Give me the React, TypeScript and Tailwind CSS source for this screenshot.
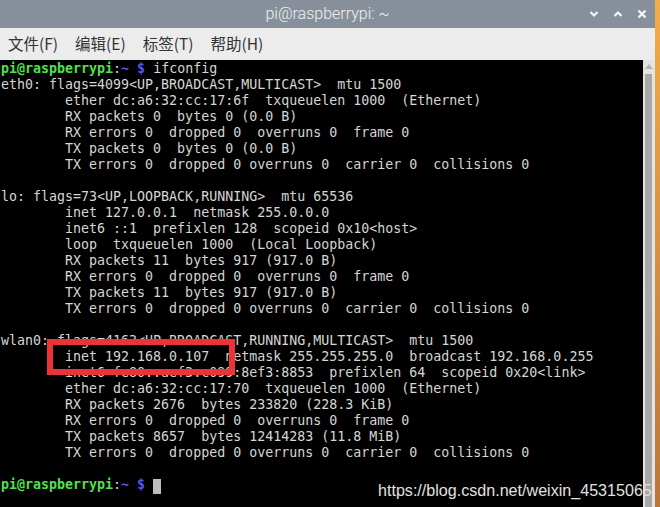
import React from "react";

const lines: string[] = [
  "eth0: flags=4099<UP,BROADCAST,MULTICAST>  mtu 1500",
  "        ether dc:a6:32:cc:17:6f  txqueuelen 1000  (Ethernet)",
  "        RX packets 0  bytes 0 (0.0 B)",
  "        RX errors 0  dropped 0  overruns 0  frame 0",
  "        TX packets 0  bytes 0 (0.0 B)",
  "        TX errors 0  dropped 0 overruns 0  carrier 0  collisions 0",
  "",
  "lo: flags=73<UP,LOOPBACK,RUNNING>  mtu 65536",
  "        inet 127.0.0.1  netmask 255.0.0.0",
  "        inet6 ::1  prefixlen 128  scopeid 0x10<host>",
  "        loop  txqueuelen 1000  (Local Loopback)",
  "        RX packets 11  bytes 917 (917.0 B)",
  "        RX errors 0  dropped 0  overruns 0  frame 0",
  "        TX packets 11  bytes 917 (917.0 B)",
  "        TX errors 0  dropped 0 overruns 0  carrier 0  collisions 0",
  "",
  "wlan0: flags=4163<UP,BROADCAST,RUNNING,MULTICAST>  mtu 1500",
  "        inet 192.168.0.107  netmask 255.255.255.0  broadcast 192.168.0.255",
  "        inet6 fe80::aef3:c099:8ef3:8853  prefixlen 64  scopeid 0x20<link>",
  "        ether dc:a6:32:cc:17:70  txqueuelen 1000  (Ethernet)",
  "        RX packets 2676  bytes 233820 (228.3 KiB)",
  "        RX errors 0  dropped 0  overruns 0  frame 0",
  "        TX packets 8657  bytes 12414283 (11.8 MiB)",
  "        TX errors 0  dropped 0 overruns 0  carrier 0  collisions 0",
  "",
];

function Prompt({ children }: { children?: React.ReactNode }) {
  return (
    <div className="h-[16px] whitespace-pre">
      <span className="font-bold text-[#4fe04f]">pi@raspberrypi</span>
      <span className="text-[#d6d6d6]">:</span>
      <span className="font-bold text-[#5656ee]">~ $</span>
      <span className="text-[#d6d6d6]"> </span>
      {children}
    </div>
  );
}

export default function App() {
  return (
    <div className="flex h-[507px] w-[660px] overflow-hidden bg-black">
      <div className="flex w-[655px] flex-col">
        {/* title bar */}
        <div className="relative flex h-[28px] items-center justify-center bg-[#87909a]">
          <span
            className="text-[16px] text-[#eef0f2]"
            style={{ fontFamily: "Roboto, 'Noto Sans', sans-serif", fontWeight: 300 }}
          >
            pi@raspberrypi: ~
          </span>
          <div className="absolute right-[8px] top-0 flex h-[28px] items-center gap-[14px]">
            <svg width="10" height="10" viewBox="0 0 10 10">
              <path d="M1.5 3 L5 6.5 L8.5 3" fill="none" stroke="#f4f5f6" strokeWidth="2.2" />
            </svg>
            <svg width="10" height="10" viewBox="0 0 10 10">
              <path d="M1.5 7 L5 3.5 L8.5 7" fill="none" stroke="#f4f5f6" strokeWidth="2.2" />
            </svg>
            <svg width="10" height="10" viewBox="0 0 10 10">
              <path d="M1.5 1.5 L8.5 8.5 M8.5 1.5 L1.5 8.5" fill="none" stroke="#f4f5f6" strokeWidth="2.4" />
            </svg>
          </div>
        </div>
        {/* menu bar */}
        <div
          className="flex h-[32px] items-center gap-[17px] bg-[#ececec] pl-[8px] text-[15.5px] text-[#333333]"
          style={{ fontFamily: "'Noto Sans CJK SC', 'Noto Sans', sans-serif" }}
        >
          <span>文件(F)</span>
          <span>编辑(E)</span>
          <span>标签(T)</span>
          <span>帮助(H)</span>
        </div>
        {/* terminal body */}
        <div className="relative flex flex-1">
          <div
            className="flex-1 bg-black pl-px pt-[1px] text-[13.3px] leading-[16px] text-[#d6d6d6]"
            style={{ fontFamily: "'DejaVu Sans Mono', monospace" }}
          >
            <Prompt>
              <span>ifconfig</span>
            </Prompt>
            {lines.map((l, i) => (
              <div key={i} className="h-[16px] whitespace-pre">
                {l}
              </div>
            ))}
            <Prompt>
              <span className="inline-block h-[15px] w-[8px] translate-y-[2px] bg-[#bdbdbd] align-top" />
            </Prompt>
          </div>
          {/* scrollbar */}
          <div className="flex w-[12px] flex-col items-center bg-[#e4e4e4] pt-[3px]">
            <svg width="8" height="6" viewBox="0 0 8 6">
              <path d="M0 6 L4 1 L8 6 Z" fill="#b4b4b4" />
            </svg>
            <div className="mt-[5px] w-[7px] flex-1 -translate-x-[1px] bg-[#a8a8a8]" />
          </div>
          {/* red highlight */}
          <div className="absolute left-[47px] top-[279px] h-[36px] w-[188px] border-[6px] border-[#ec3438]" />
          {/* watermark */}
          <div
            className="absolute left-[378px] top-[418px] text-[16.1px] text-[#e0e0e0]"
            style={{ fontFamily: "'Liberation Sans', Arial, sans-serif" }}
          >
            https://blog.csdn.net/weixin_45315065
          </div>
        </div>
      </div>
      <div className="w-[5px] bg-gradient-to-b from-[#f2ad45] to-[#b97639]" />
    </div>
  );
}
